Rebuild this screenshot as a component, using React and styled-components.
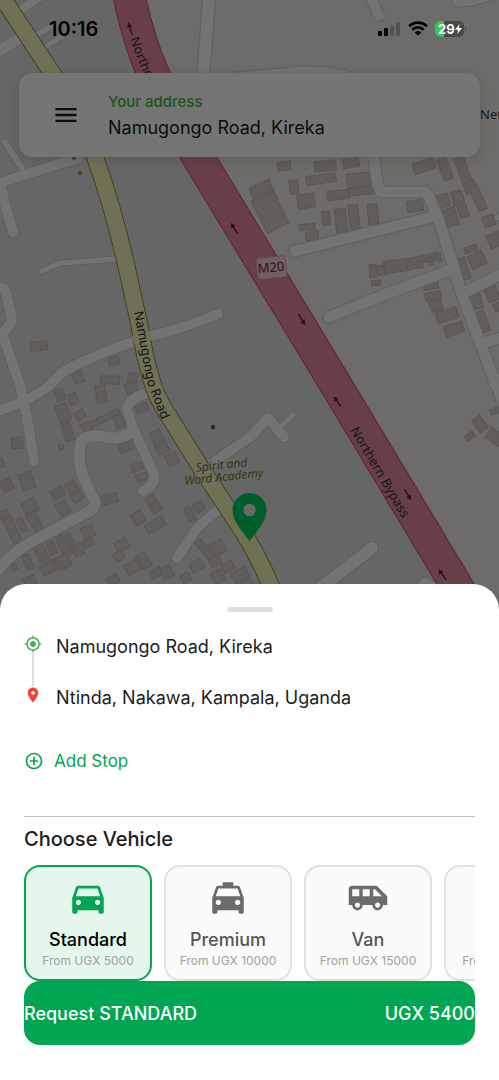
import React, { useState } from "react";
import styled, { createGlobalStyle } from "styled-components";
import {
  MdAddCircleOutline,
  MdAirportShuttle,
  MdDirectionsCar,
  MdLocalTaxi,
  MdLocationOn,
  MdMenu,
  MdMyLocation,
  MdTwoWheeler,
} from "react-icons/md";

const GlobalStyle = createGlobalStyle`
  * {
    box-sizing: border-box;
  }

  body {
    margin: 0;
    font-family: Inter, "Open Sans", sans-serif;
    color: #1c1c1e;
  }

  button {
    font: inherit;
    color: inherit;
    border: 0;
    padding: 0;
    background: none;
    cursor: pointer;
  }
`;

// Layout
const Screen = styled.main`
  position: relative;
  display: flex;
  flex-direction: column;
  min-height: 100vh;
  overflow: hidden;
`;

const MapCanvas = styled.svg`
  position: absolute;
  inset: 0;
  width: 100%;
  height: 100%;
  font-family: "Noto Sans", sans-serif;
`;

const Scrim = styled.div`
  position: absolute;
  inset: 0;
  background: rgba(0, 0, 0, 0.54);
`;

const StatusBar = styled.header`
  position: relative;
  z-index: 1;
  display: flex;
  align-items: center;
  justify-content: space-between;
  height: 57px;
  margin-bottom: 16px;
  padding: 0 32px 0 49px;
  color: #000;
`;

const Clock = styled.time`
  font-size: 20px;
  font-weight: 600;
`;

const StatusIcons = styled.div`
  display: flex;
  align-items: center;
  gap: 7px;
`;

// Address card
const AddressCard = styled.section`
  position: relative;
  display: flex;
  align-items: center;
  gap: 28px;
  margin: 0 19px;
  padding: 16px 33px;
  border-radius: 14px;
  background: rgba(255, 255, 255, 0.97);
  box-shadow: 0 3px 14px rgba(0, 0, 0, 0.14);
`;

const MenuButton = styled.button`
  display: flex;
  font-size: 28px;
`;

const AddressLabel = styled.p`
  margin: 0;
  font-size: 15px;
  font-weight: 500;
  line-height: 26px;
  color: #4caf50;
`;

const AddressValue = styled.p`
  margin: 0;
  font-size: 18px;
  line-height: 26px;
`;

// Bottom sheet
const Sheet = styled.section`
  position: relative;
  z-index: 1;
  margin-top: auto;
  padding: 23px 24px 35px;
  border-radius: 26px 26px 0 0;
  background: #fff;
`;

const Handle = styled.div`
  width: 46px;
  height: 5px;
  margin: 0 auto 23px;
  border-radius: 3px;
  background: #dedede;
`;

const Stops = styled.ul`
  margin: 0;
  padding: 0;
  list-style: none;
`;

const Stop = styled.li`
  display: flex;
  gap: 14px;
  font-size: 18px;
  line-height: 24px;
`;

const StopMarker = styled.span`
  display: flex;
  flex-direction: column;
  align-items: center;
  font-size: 18px;
  color: ${(props) => props.$color};
`;

const StopLine = styled.span`
  width: 2px;
  height: 33px;
  background: #dedede;
`;

const AddStop = styled.button`
  display: flex;
  align-items: center;
  gap: 10px;
  margin-top: 40px;
  font-size: 17px;
  line-height: 22px;
  color: #00a651;

  svg {
    font-size: 20px;
  }
`;

const Divider = styled.hr`
  height: 1px;
  margin: 44px 0 8px;
  border: 0;
  background: #c2c2c2;
`;

const Heading = styled.h2`
  margin: 0 0 12px;
  font-size: 20px;
  font-weight: 500;
  line-height: 28px;
`;

const VehicleList = styled.div`
  display: flex;
  gap: 12px;
  overflow-x: auto;
  scrollbar-width: none;
`;

const VehicleCard = styled.button`
  flex: 0 0 128px;
  display: flex;
  flex-direction: column;
  align-items: center;
  padding: 10px 0 9px;
  border: 2px solid ${(props) => (props.$active ? "#0ba353" : "#e0e0e0")};
  border-radius: 16px;
  background: ${(props) => (props.$active ? "#e5f6ed" : "#fafafa")};

  svg {
    margin-bottom: 9px;
    font-size: 42px;
    color: ${(props) => (props.$active ? "#00a651" : "#6b6b6b")};
  }
`;

const VehicleName = styled.span`
  font-size: 18px;
  font-weight: 500;
  line-height: 24px;
  color: ${(props) => (props.$active ? "#000" : "#555")};
`;

const VehiclePrice = styled.span`
  font-size: 12px;
  line-height: 18px;
  white-space: nowrap;
  color: #a0a0a0;
`;

const RequestButton = styled.button`
  display: flex;
  align-items: center;
  justify-content: space-between;
  width: 100%;
  height: 64px;
  border-radius: 16px;
  background: #00a651;
  font-size: 18px;
  font-weight: 500;
  color: #fff;
`;

// Map data
const streets = [
  { w: 12, d: "M-5 53 L22 37" },
  { w: 10, d: "M18 11 L40 -3" },
  { w: 6, d: "M38 34 L52 26 M47 46 L62 36" },
  { w: 11, d: "M-4 184 L30 173 L78 158 M0 183 L4 200 L13 232" },
  { w: 7, d: "M5 142 L22 168" },
  { w: 6, d: "M42 271 L60 263 L118 259" },
  { w: 11, d: "M218 314 Q185 328 147 337 Q90 356 63 372 L50 385 Q28 403 -4 411" },
  { w: 11, d: "M2 288 L5 289 L12 318 Q12 325 2 333 L20 385 L27 418 L34 461" },
  { w: 11, d: "M148 392 Q127 400 127 409 L133 428 L154 474 Q157 483 143 491" },
  { w: 12, d: "M133 431 Q118 442 102 436 Q80 434 80 447 Q78 466 84 478 L95 502 Q95 508 90 511 L33 541 Q12 552 -4 572" },
  { w: 11, d: "M177 558 L197 528 L220 508" },
  { w: 11, d: "M210 465 L250 437 L268 418 L284 437" },
  { w: 6, d: "M279 428 L293 415" },
  { w: 13, d: "M372 548 L315 592 M425 584 L436 590" },
  { w: 13, d: "M209 -4 Q207 30 203 76" },
  { w: 11, d: "M370 -5 L379 16" },
  { w: 12, d: "M458 1 Q472 2 502 -9" },
  { w: 10, d: "M235 77 Q265 75 300 71 Q335 70 350 77" },
  { w: 12, d: "M371 120 L374 158 Q377 189 381 192 L425 192 Q431 197 442 230 L463 298 L504 405" },
  { w: 12, d: "M295 251 L436 216" },
  { w: 12, d: "M329 317 Q390 292 450 270" },
  { w: 12, d: "M463 293 L504 273 M480 344 L504 337" },
  { w: 14, d: "M495 382 L504 390" },
  { w: 6, d: "M497 218 L504 213" },
];

// cx, cy, width, height, rotation
const buildings = [
  [284, 166, 13, 9, -8], [325, 166, 22, 10, -5], [321, 179, 30, 9, -8], [351, 163, 16, 9, -10],
  [359, 183, 24, 20, -6], [263, 193, 22, 20, -25], [294, 187, 9, 14, -8], [306, 201, 17, 14, -8],
  [338, 195, 22, 9, -6], [361, 191, 24, 8, -6], [424, 166, 22, 11, -18], [445, 169, 10, 22, -20],
  [463, 170, 10, 26, -20], [470, 187, 12, 12, -20], [457, 198, 10, 14, -20], [270, 212, 24, 36, -27],
  [307, 227, 16, 6, -5], [312, 236, 13, 9, -8], [326, 218, 8, 14, -5], [341, 221, 11, 25, -6],
  [354, 217, 10, 25, -6], [373, 214, 10, 20, -5], [415, 206, 16, 11, -8], [442, 201, 14, 13, -15],
  [451, 217, 12, 18, -18], [461, 205, 9, 26, -18], [478, 198, 9, 26, -24], [489, 221, 12, 11, -20],
  [495, 240, 14, 14, -25], [471, 249, 13, 6, -20], [477, 260, 16, 14, -25], [463, 269, 10, 22, -18],
  [373, 271, 7, 13, -4], [383, 270, 10, 10, -6], [396, 266, 24, 12, -8], [413, 263, 12, 11, -10],
  [424, 259, 30, 7, -12], [420, 264, 5, 8, -12], [431, 261, 5, 8, -12], [439, 258, 4, 9, -12],
  [376, 283, 9, 5, -5], [431, 286, 15, 7, -10], [433, 296, 16, 8, -12], [436, 306, 12, 10, -18],
  [447, 315, 22, 11, -16], [454, 329, 19, 11, -18], [476, 301, 11, 16, -15], [482, 322, 11, 22, -20],
  [492, 294, 12, 15, -20], [498, 307, 8, 8, -20], [480, 424, 10, 15, -35], [470, 436, 9, 6, -35],
  [495, 437, 16, 12, 35], [495, 411, 10, 6, -20], [39, 346, 17, 9, -5], [114, 361, 11, 8, -12],
  [78, 377, 10, 12, -20], [110, 380, 19, 8, 2], [132, 382, 9, 18, 10], [60, 395, 9, 12, -18],
  [73, 399, 9, 11, -20], [63, 413, 12, 18, -20], [101, 394, 10, 17, -10], [80, 415, 10, 9, -30],
  [87, 427, 10, 10, -30], [105, 418, 32, 6, -27], [131, 388, 11, 10, -20], [142, 408, 12, 8, -20],
  [119, 421, 9, 13, -20], [17, 443, 11, 11, -5], [68, 432, 9, 18, -18], [61, 447, 5, 5, -10],
  [0, 463, 7, 9, -20], [126, 447, 14, 9, -22], [157, 437, 11, 13, -25], [162, 448, 12, 11, -25],
  [172, 459, 11, 12, -28], [137, 467, 12, 8, -20], [142, 477, 12, 7, -20], [27, 481, 13, 17, -20],
  [7, 485, 11, 12, -25], [58, 493, 13, 10, -30], [72, 487, 10, 11, -30], [77, 497, 11, 9, -30],
  [63, 508, 11, 14, -30], [110, 499, 16, 9, -15], [151, 500, 10, 8, -30], [156, 508, 10, 9, -30],
  [138, 518, 11, 12, -30], [155, 525, 20, 10, -30], [30, 507, 14, 14, -30], [33, 519, 10, 14, -30],
  [5, 516, 9, 12, -25], [13, 531, 9, 30, -25], [22, 525, 6, 14, -25], [38, 527, 8, 9, -30],
  [88, 532, 12, 12, -25], [88, 543, 10, 8, -25], [63, 546, 7, 22, -25], [71, 543, 6, 20, -25],
  [78, 550, 10, 12, -25], [52, 548, 8, 13, -25], [41, 553, 10, 17, -25], [28, 562, 7, 15, -25],
  [48, 568, 15, 11, -30], [63, 562, 14, 14, -30], [14, 567, 5, 6, -25], [122, 545, 13, 11, -30],
  [119, 556, 10, 9, -30], [133, 567, 16, 11, -30], [144, 561, 10, 16, -30], [156, 573, 12, 8, -30],
  [167, 572, 11, 12, -30], [190, 514, 7, 14, -30], [199, 507, 10, 10, -30], [218, 548, 14, 13, -30],
  [205, 550, 7, 26, -40], [215, 561, 11, 10, -30], [197, 566, 13, 10, -30], [228, 567, 12, 9, -30],
  [240, 575, 16, 11, -30], [218, 577, 11, 12, -30], [186, 578, 9, 9, -30], [30, 581, 12, 9, -25],
  [113, 580, 12, 9, -30], [247, 584, 12, 9, -30],
];

// x, y, rotation
const arrows = [
  [130, 28, -18],
  [234, 228, -32],
  [302, 320, 149],
  [337, 401, -36],
  [408, 495, 149],
  [442, 574, -36],
];

const trunkRoad = "M128 -10 Q138 40 153 73 Q165 100 198 157 L336 385 L467 603";
const mainRoad = "M-4 -12 L52 73 Q80 112 95 157 Q112 204 125 260 L139 323 Q145 360 154 388 Q160 403 170 418 L201 468 L234 518 Q264 562 280 610";

const CityMap = () => (
  <MapCanvas viewBox="0 0 499 1080" preserveAspectRatio="xMidYMin slice" aria-hidden="true">
    <rect width="499" height="1080" fill="#dedede" />
    <path d="M128 -10 Q138 40 153 73 Q165 100 198 157 L467 603 L499 603 V-10 Z" fill="#eeece6" />
    <g fill="#d3cac4" stroke="#c4b9b2" strokeWidth="1">
      {buildings.map(([x, y, w, h, r]) => (
        <rect
          key={`${x}-${y}`}
          x={x - w / 2}
          y={y - h / 2}
          width={w}
          height={h}
          transform={`rotate(${r} ${x} ${y})`}
        />
      ))}
    </g>
    <g fill="none" strokeLinecap="round" strokeLinejoin="round">
      {streets.map((street) => (
        <path key={street.d} d={street.d} stroke="#cfcecc" strokeWidth={street.w + 1} />
      ))}
      {streets.map((street) => (
        <path key={street.d} d={street.d} stroke="#fafafa" strokeWidth={street.w - 1} />
      ))}
      <path d={mainRoad} stroke="#8b9440" strokeWidth="18" />
      <path d={mainRoad} stroke="#f4f6b8" strokeWidth="16" />
      <path d="M133 340 L151 335" stroke="#f4f6b8" strokeWidth="9" strokeLinecap="butt" />
      <path d={trunkRoad} stroke="#d0446b" strokeWidth="33" />
      <path d={trunkRoad} stroke="#e58a9c" strokeWidth="31" />
    </g>

    <g stroke="#6b1730" fill="#6b1730" strokeWidth="1.4">
      {arrows.map(([x, y, r]) => (
        <g key={y} transform={`translate(${x} ${y}) rotate(${r})`}>
          <path d="M0 7 V-2" />
          <path d="M0 -6 L2.6 -1 H-2.6 Z" stroke="none" />
        </g>
      ))}
    </g>

    <defs>
      <path id="northern" d="M130 39 Q138 62 151 90" />
      <path id="namugongo" d="M134 312 L142 355 Q145 378 151 393 L165 428" />
      <path id="bypass" d="M350 430 L409 530" />
    </defs>
    <g fill="#2e2e2e" fontSize="13">
      <text><textPath href="#northern">Northern</textPath></text>
      <text><textPath href="#namugongo">Namugongo Road</textPath></text>
      <text><textPath href="#bypass">Northern Bypass</textPath></text>
      <text x="480" y="119" stroke="#fff" strokeWidth="2" paintOrder="stroke">Net</text>
    </g>
    <g transform="rotate(-6 271 267)">
      <rect x="257" y="257" width="29" height="21" rx="2" fill="#f3cfd8" stroke="#e3a5b3" />
      <text x="271" y="272" fontSize="13" textAnchor="middle" fill="#7b1737">M20</text>
    </g>
    <g
      transform="rotate(-6 223 470)"
      fill="#6f7230"
      stroke="#eceadf"
      strokeWidth="1.6"
      strokeOpacity="0.7"
      paintOrder="stroke"
      fontSize="12"
      fontStyle="italic"
      textAnchor="middle"
    >
      <text x="222" y="469">Spirit and</text>
      <text x="223" y="481">Word Academy</text>
    </g>
    <circle cx="213" cy="427" r="2.2" fill="#8b2f8b" />
    <circle cx="80" cy="173" r="2.2" fill="#d9861c" />
    <circle cx="74" cy="158" r="2.2" fill="#d9861c" />

    {/* pickup pin */}
    <path
      d="M249.500 541 C240 529 232.500 520 232.500 510 A17 17 0 0 1 266.500 510 C266.500 520 259 529 249.500 541 Z"
      fill="#00cc60"
    />
    <circle cx="249.5" cy="510" r="6.2" fill="#e2e2de" />
  </MapCanvas>
);

const SignalIcon = () => (
  <svg width="23" height="14" viewBox="0 0 23 14" aria-hidden="true">
    <rect x="0" y="9" width="4" height="5" rx="1" />
    <rect x="6" y="6" width="4" height="8" rx="1" />
    <rect x="12" y="3" width="4" height="11" rx="1" opacity="0.22" />
    <rect x="18" y="0" width="4" height="14" rx="1" opacity="0.22" />
  </svg>
);

const WifiIcon = () => (
  <svg width="20" height="15" viewBox="0 0 20 15" aria-hidden="true">
    <g fill="none" stroke="#000" strokeWidth="2.8">
      <path d="M1.200 5.200 A12.500 12.500 0 0 1 18.800 5.200" />
      <path d="M4.300 8.700 A8 8 0 0 1 15.700 8.700" />
    </g>
    <path d="M10 14.600 L6.700 11.400 A4.700 4.700 0 0 1 13.300 11.400 Z" />
  </svg>
);

const BatteryIcon = () => (
  <svg width="32" height="16" viewBox="0 0 32 16" aria-hidden="true">
    <defs>
      <clipPath id="battery-level">
        <rect width="9" height="16" />
      </clipPath>
    </defs>
    <rect width="29" height="16" rx="5" fill="#484846" />
    <rect width="29" height="16" rx="5" fill="#34c759" clipPath="url(#battery-level)" />
    <path d="M30 5.500 Q32 8 30 10.500 Z" fill="#484846" />
    <text x="3" y="13" fontSize="13" fontWeight="700" fill="#fff">29</text>
    <path d="M24.500 3 L20 8.800 H23 L22.300 13 L27 7 H24 Z" fill="#fff" />
  </svg>
);

const vehicles = [
  { name: "Standard", price: 5000, Icon: MdDirectionsCar },
  { name: "Premium", price: 10000, Icon: MdLocalTaxi },
  { name: "Van", price: 15000, Icon: MdAirportShuttle },
  { name: "Boda", price: 2000, Icon: MdTwoWheeler },
];

export default function App() {
  const [selected, setSelected] = useState("Standard");

  return (
    <Screen>
      <GlobalStyle />
      <CityMap />
      <StatusBar>
        <Clock>10:16</Clock>
        <StatusIcons>
          <SignalIcon />
          <WifiIcon />
          <BatteryIcon />
        </StatusIcons>
      </StatusBar>
      <AddressCard>
        <MenuButton aria-label="Menu">
          <MdMenu />
        </MenuButton>
        <div>
          <AddressLabel>Your address</AddressLabel>
          <AddressValue>Namugongo Road, Kireka</AddressValue>
        </div>
      </AddressCard>
      <Scrim />

      <Sheet>
        <Handle />
        <Stops>
          <Stop>
            <StopMarker $color="#4caf50">
              <MdMyLocation />
              <StopLine />
            </StopMarker>
            Namugongo Road, Kireka
          </Stop>
          <Stop>
            <StopMarker $color="#f44336">
              <MdLocationOn />
            </StopMarker>
            Ntinda, Nakawa, Kampala, Uganda
          </Stop>
        </Stops>
        <AddStop>
          <MdAddCircleOutline />
          Add Stop
        </AddStop>
        <Divider />
        <Heading>Choose Vehicle</Heading>
        <VehicleList>
          {vehicles.map(({ name, price, Icon }) => (
            <VehicleCard
              key={name}
              $active={name === selected}
              aria-pressed={name === selected}
              onClick={() => setSelected(name)}
            >
              <Icon />
              <VehicleName $active={name === selected}>{name}</VehicleName>
              <VehiclePrice>From UGX {price}</VehiclePrice>
            </VehicleCard>
          ))}
        </VehicleList>
        <RequestButton>
          <span>Request {selected.toUpperCase()}</span>
          <span>UGX 5400</span>
        </RequestButton>
      </Sheet>
    </Screen>
  );
}
